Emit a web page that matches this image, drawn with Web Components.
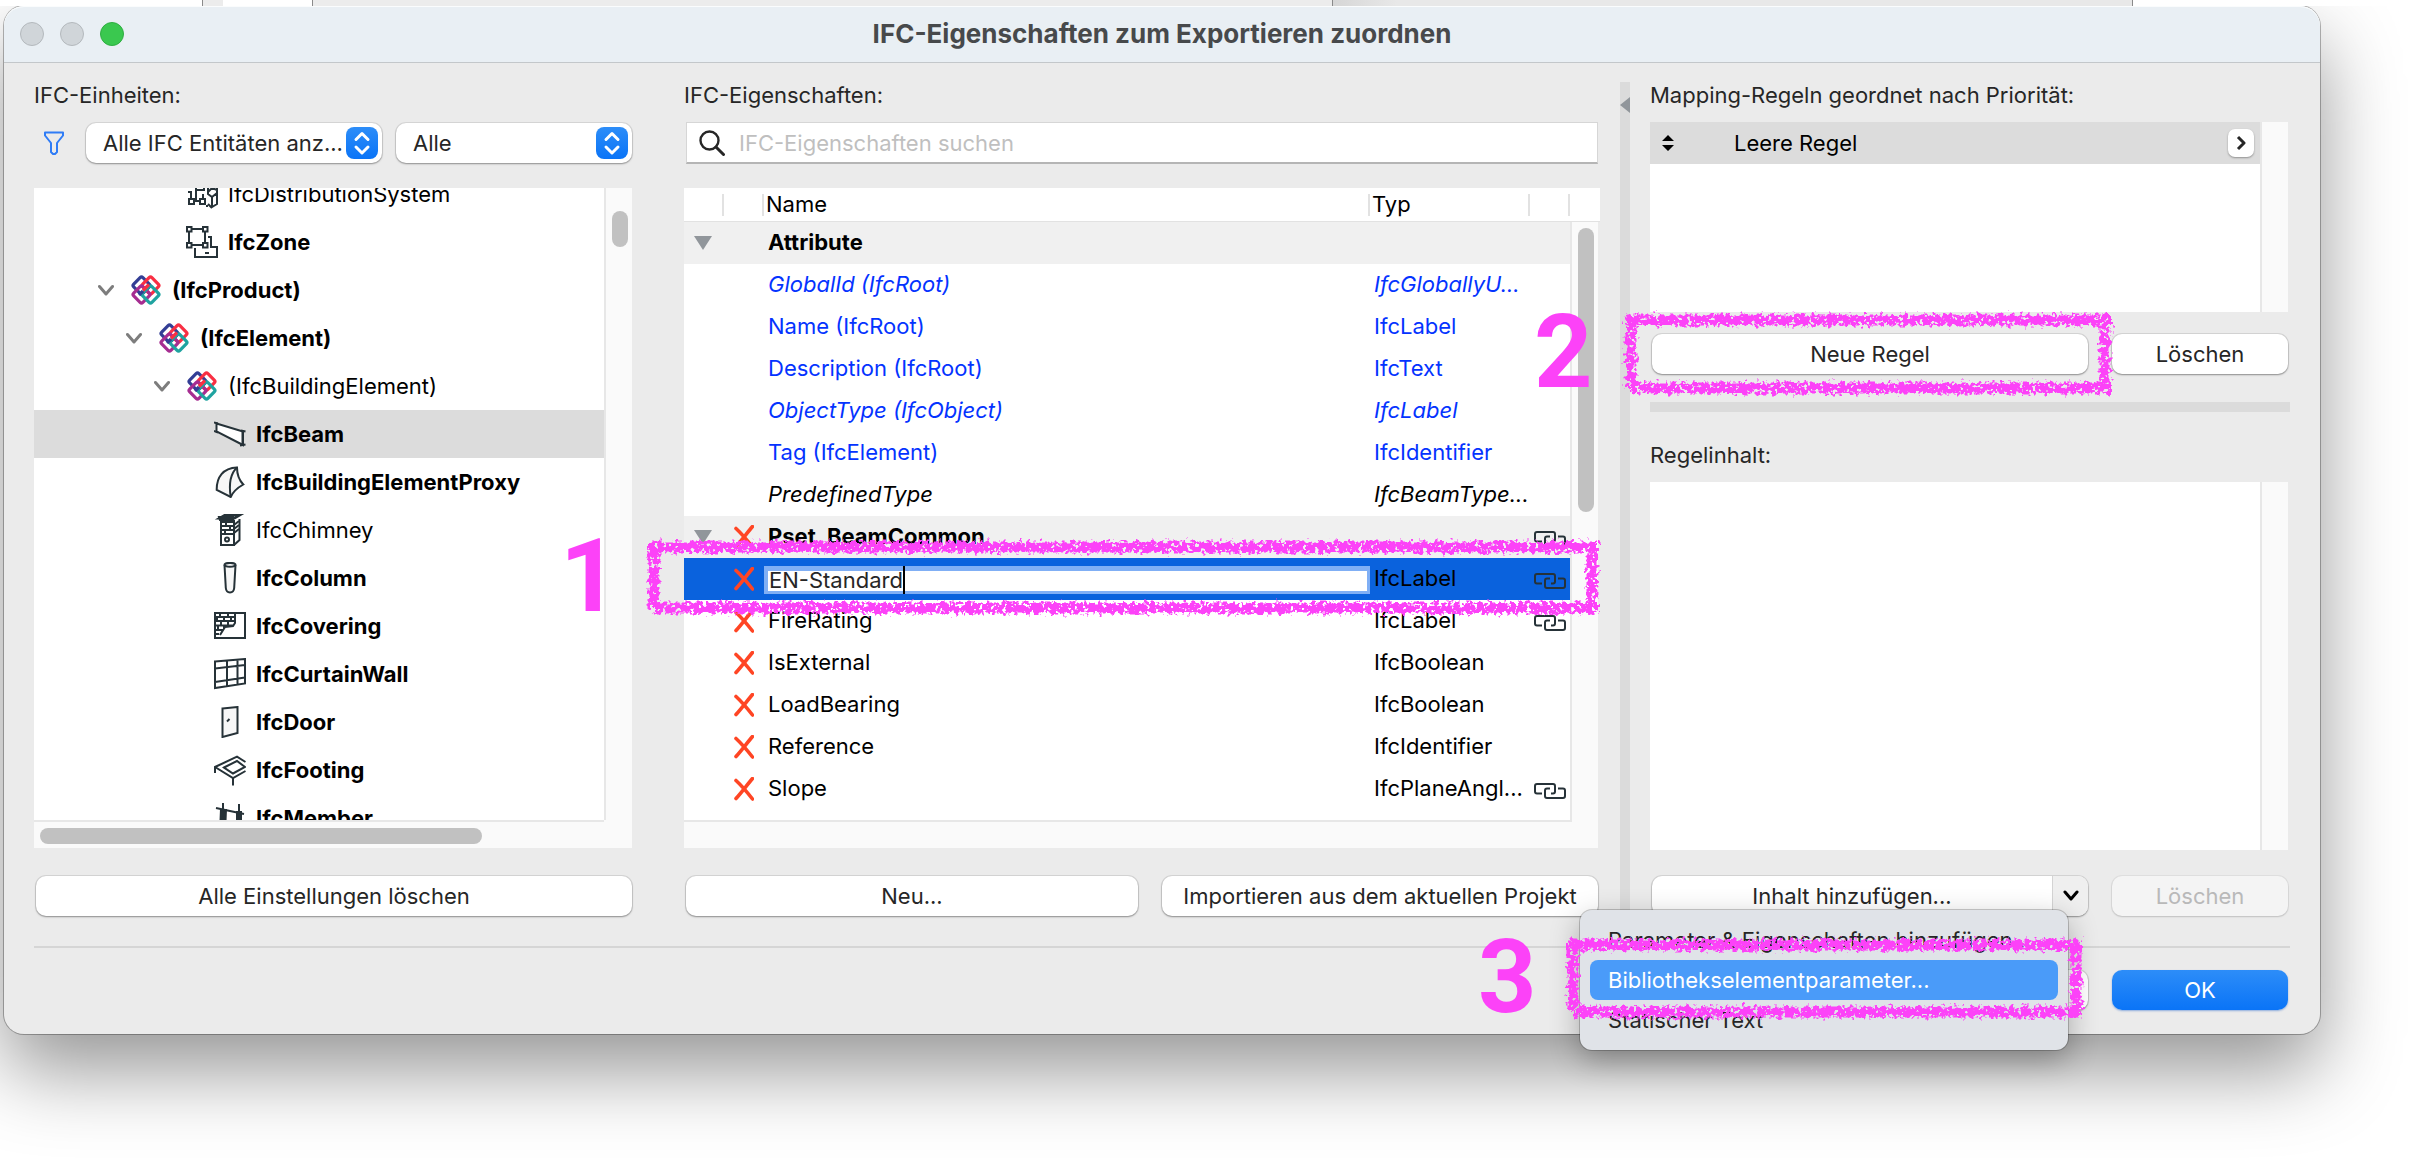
<!DOCTYPE html>
<html lang="de">
<head>
<meta charset="utf-8">
<title>IFC-Eigenschaften zum Exportieren zuordnen</title>
<style>
  html, body { margin: 0; }
  body {
    position: relative;
    min-height: 1168px;
    background: #fff;
    overflow-x: hidden;
    font: 22px/26px Inter, "Liberation Sans", sans-serif;
    color: #262626;
  }
</style>
</head>
<body>
<windows-behind></windows-behind>
<mac-window heading="IFC-Eigenschaften zum Exportieren zuordnen">
  <entity-panel slot="left"></entity-panel>
  <property-panel slot="middle"></property-panel>
  <split-bar slot="splitter"></split-bar>
  <rule-panel slot="right"></rule-panel>
  <push-button slot="actions" label="Abbrechen" blank></push-button>
  <push-button slot="actions" label="OK" kind="primary"></push-button>
</mac-window>
<marker-layer></marker-layer>

<script>
const make = (host, html) => {
  host.attachShadow({ mode: 'open' }).innerHTML =
    '<style>*,*::before,*::after{box-sizing:border-box}</style>' + html;
};

/* Edges of the other windows that show above the dialog */
customElements.define('windows-behind', class extends HTMLElement {
  connectedCallback() {
    make(this, `<style>
      :host{display:flex;height:6px}
      div{border-left:1px solid #8a8a8a;background:#ececec}
      .a{flex:202;border:0;background:#fff}.b{flex:20}.c{flex:89;background:#fff;border:0}
      .d{flex:1021}.e{flex:801;background:linear-gradient(90deg,#d6d6d6,#e8e8e8 8%)}
      .f{flex:287;background:#fff}
    </style><div class="a"></div><div class="b"></div><div class="c"></div><div class="d"></div><div class="e"></div><div class="f"></div>`);
  }
});

customElements.define('mac-window', class extends HTMLElement {
  connectedCallback() {
    make(this, `<style>
      :host{display:block;margin:0 100px 0 4px;background:#ebebeb;border-radius:20px;
        box-shadow:0 0 0 1px rgba(0,0,0,.28),0 36px 80px rgba(0,0,0,.42)}
      header{display:grid;grid-template-columns:1fr auto 1fr;align-items:center;height:57px;
        padding:0 16px;background:#e9eff4;border-bottom:1px solid #c3c7ca;border-radius:20px 20px 0 0;
        box-shadow:inset 0 1px #fafcfd}
      h1{margin:0;font-size:26px;line-height:32px;font-weight:700;color:#47494b}
      .lights{display:flex;gap:16px}
      .lights button{width:24px;height:24px;padding:0;border-radius:50%;border:1px solid #b4b9bd;background:#d0d5d9}
      .lights button.zoom{background:#3ac84f;border-color:#2fae41}
      main{display:grid;grid-template-columns:598fr 52px 916fr 20px 10px 20px 640fr;padding:19px 30px 0}
      ::slotted([slot=left]){grid-column:1}
      ::slotted([slot=middle]){grid-column:3}
      ::slotted([slot=splitter]){grid-column:5}
      ::slotted([slot=right]){grid-column:7}
      hr{height:2px;margin:30px 30px 22px;border:0;background:#d5d5d5}
      footer{display:flex;justify-content:flex-end;gap:24px;padding:0 32px 24px}
      ::slotted([slot=actions]){width:176px}
    </style>
    <header><div class="lights"><button aria-label="Schließen"></button><button aria-label="Minimieren"></button><button class="zoom" aria-label="Zoomen"></button></div>
    <h1>${this.getAttribute('heading')}</h1></header>
    <main><slot name="left"></slot><slot name="middle"></slot><slot name="splitter"></slot><slot name="right"></slot></main>
    <hr><footer><slot name="actions"></slot></footer>`);
  }
});

customElements.define('push-button', class extends HTMLElement {
  connectedCallback() {
    const kind = this.getAttribute('kind') || '';
    const label = this.getAttribute('label');
    make(this, `<style>
      :host{display:block}
      button{display:block;width:100%;height:40px;padding:0 8px;border:0;border-radius:10px;background:#fff;
        font:inherit;color:#262626;white-space:nowrap;
        box-shadow:0 0 0 1px rgba(0,0,0,.09),0 1px 2px rgba(0,0,0,.34)}
      .primary{background:linear-gradient(#2d8df8,#0a74f7);color:#fff;box-shadow:0 1px 2px rgba(0,80,200,.4)}
      button:disabled{background:#f4f4f4;color:#b9b9b9;box-shadow:0 0 0 1px rgba(0,0,0,.05),0 1px 2px rgba(0,0,0,.14)}
    </style><button class="${kind}" ${kind === 'disabled' ? 'disabled' : ''} aria-label="${label}">${this.hasAttribute('blank') ? '' : label}</button>`);
  }
});

customElements.define('popup-select', class extends HTMLElement {
  connectedCallback() {
    const label = this.getAttribute('label');
    make(this, `<style>
      :host{display:grid;border-radius:10px;background:#fff;
        box-shadow:0 0 0 1px rgba(0,0,0,.08),0 1px 2px rgba(0,0,0,.34)}
      select,svg{grid-area:1/1}
      select{appearance:none;width:100%;height:40px;margin:0;padding:0 36px 0 17px;border:0;background:none;font:inherit;color:#262626}
      svg{justify-self:end;align-self:center;margin-right:4px;pointer-events:none}
    </style><select aria-label="${label}"><option>${this.getAttribute('value')}</option></select>
    <svg width="32" height="32"><defs><linearGradient id="g" x2="0" y2="1"><stop stop-color="#2d8df8"/><stop offset="1" stop-color="#0a74f7"/></linearGradient></defs>
    <rect width="32" height="32" rx="8" fill="url(#g)"/><path d="M10 12.500L16 6.500l6 6M10 20l6 6 6-6" fill="none" stroke="#fff" stroke-width="3" stroke-linecap="round" stroke-linejoin="round"/></svg>`);
  }
});

const ICONS = {
  system: '<path d="M2 6h8v6h8v-4M10 12v6M2 14h4M5 20v-6M14 23h-4v-9"/><rect x="3" y="21" width="5" height="5"/><rect x="14" y="21" width="5" height="5"/><path d="M17 21v-5M22 8v8l4 3 5-4V6M26 19v10l5-3V15M22 26l4 4M20 28h2M26 12v-6M22 14l4-4 5 2"/>',
  zone: '<rect x="1" y="1" width="4.500" height="4.500"/><rect x="17" y="1" width="4.500" height="4.500"/><rect x="1" y="17" width="4.500" height="4.500"/><rect x="17" y="17" width="4.500" height="4.500"/><path d="M5.500 3H17M5.500 19H17M3 5.500V17M19 5.500V17M22 11h3v10h6v10H9V22M19 27h4"/>',
  beam: '<path d="M2.500 5.500L29 13.500V27L2.500 13.500z" fill="#fff"/><path d="M0 4.500l4 1M0 13l4 1.500M27 12.500l4.500 1M26 27.500l5.500-1M28.500 13v14"/>',
  proxy: '<path d="M2.700 24C2.500 11 9 2 23 1.500 23 8 25 14 29.300 18.500 23 22 19 26 16.700 31z" fill="#f7f7f7"/><path d="M23 1.500C16 8 15 20 16.700 31"/>',
  chimney: '<path d="M7 5v26h13V6M20 31l5.500-5V5M4.500 4.500h16l6-3.500H10.500z" fill="#fff"/><path d="M5 4h15l3-2.500M7 8h13M7 12h13M7 16h13M7 20h13M12 8v4M16 12v4M11 16v4M20 11l5-4M20 15l5-4M20 19l5-4" stroke-width="2"/><path d="M5 3h14v3H6z" fill="#263238"/><circle cx="13" cy="25.500" r="2"/>',
  column: '<path d="M10.500 3l1.300 23q.4 4.500 4.200 4.500t4.200-4.500L21.500 3" fill="#f7f7f7"/><ellipse cx="16" cy="2.800" rx="5.500" ry="1.900" fill="#fff"/>',
  covering: '<rect x="1" y="3" width="30" height="25"/><path d="M1 7h20M1 11h20M1 15.500h19M1 20h8M1 24h4M6 3v4M14 3v4M21 3v10l-2 3-8 1-5 8M3 7v4M10 7v4M17 7v4M7 11v4M14 11v4M4 15v5M10 15v4"/>',
  curtain: '<path d="M1 3.500L31 1v24.500L1 30zM13 2.500V28M23.500 1.500v25M1 10.500L31 7M1 24l30-4.500"/>',
  door: '<path d="M8.500 2.500L23.500 1v26l-15 4z" fill="#f7f7f7"/><path d="M13 15.500l2.500-2.500"/>',
  footing: '<path d="M1 19v-6L23 2.700 31.500 8M1 13l18 11 12.500-7M19 24v7.500M10 13.500L23 7l8 6-12 6.500z"/>',
  member: '<path d="M6 7h7l-1 25H5zM22 9h6v23h-6z" fill="#263238" stroke="none"/><path d="M9 1v7M25 2v8M2 6l28 6" />',
  ifc: '<g stroke-width="3.200"><rect x="5" y="5" width="13" height="13" rx="2" transform="rotate(45 11.500 11.500)" stroke="#333e95"/><rect x="14" y="5" width="13" height="13" rx="2" transform="rotate(45 20.500 11.500)" stroke="#f92f43"/><rect x="5" y="14" width="13" height="13" rx="2" transform="rotate(45 11.500 20.500)" stroke="#a62d91"/><rect x="14" y="14" width="13" height="13" rx="2" transform="rotate(45 20.500 20.500)" stroke="#1fa3a0"/><path d="M19 10.500l-6 6" stroke="#f92f43"/><path d="M13 17l-4 4" stroke="#333e95"/></g>'
};

customElements.define('tree-item', class extends HTMLElement {
  connectedCallback() {
    const icon = this.getAttribute('icon');
    make(this, `<style>
      :host{display:flex;align-items:center;height:48px;padding-left:var(--indent);color:#000;white-space:nowrap}
      :host([strong]){font-weight:700}
      :host([selected]){background:#dcdcdc}
      .twist{width:16px;margin-right:16px}
      .icon{margin-right:10px;fill:none;stroke:#263238;stroke-width:2}
    </style>${icon === 'ifc' ? '<svg class="twist" width="16" height="16" viewBox="0 0 16 16" fill="none" stroke="#7d7d7d" stroke-width="3" stroke-linecap="round" stroke-linejoin="round"><path d="M1.500 4.500L8 12l6.500-7.500"/></svg>' : ''}
    <svg class="icon" width="32" height="32" viewBox="0 0 32 32">${ICONS[icon]}</svg><span><slot></slot></span>`);
  }
});

customElements.define('entity-panel', class extends HTMLElement {
  connectedCallback() {
    const rows = [
      [152, 'system', 'IfcDistributionSystem', ''], [152, 'zone', 'IfcZone', 'strong'],
      [64, 'ifc', '(IfcProduct)', 'strong'], [92, 'ifc', '(IfcElement)', 'strong'], [120, 'ifc', '(IfcBuildingElement)', ''],
      [180, 'beam', 'IfcBeam', 'strong selected'], [180, 'proxy', 'IfcBuildingElementProxy', 'strong'],
      [180, 'chimney', 'IfcChimney', ''], [180, 'column', 'IfcColumn', 'strong'], [180, 'covering', 'IfcCovering', 'strong'],
      [180, 'curtain', 'IfcCurtainWall', 'strong'], [180, 'door', 'IfcDoor', 'strong'], [180, 'footing', 'IfcFooting', 'strong'],
      [180, 'member', 'IfcMember', 'strong']
    ];
    make(this, `<style>
      :host{display:flex;flex-direction:column}
      .title{margin-bottom:14px}
      .filters{display:flex;align-items:center;height:42px;margin-bottom:24px;padding-left:10px}
      .filters svg{width:20px;margin-right:22px}
      .one{flex:296;margin-right:14px}.two{flex:236}
      .box{display:grid;grid-template-columns:minmax(0,1fr) 28px;grid-template-rows:632px 28px;background:#fafafa;margin-bottom:28px}
      .tree{display:flex;flex-direction:column;justify-content:flex-start;overflow:hidden;background:#fff}
      .tree div{margin-top:-18px}
      .v{border-left:2px solid #e7e7e7;padding:23px 4px 0 6px}
      .v i{display:block;height:36px;border-radius:8px;background:#c1c1c1}
      .h{border-top:2px solid #e7e7e7;padding:6px 122px 0 6px}
      .h i{display:block;height:16px;border-radius:8px;background:#c1c1c1}
      push-button{margin-left:2px}
    </style>
    <div class="title">IFC-Einheiten:</div>
    <div class="filters"><svg width="20" height="24" viewBox="0 0 20 24" fill="none" stroke="#2f7cf6" stroke-width="2" stroke-linejoin="round"><path d="M1 1.500h18v3l-6 7.500v9l-2 2H9l-2-2V12L1 4.500z"/></svg>
    <popup-select class="one" label="Entitäten" value="Alle IFC Entitäten anz..."></popup-select><popup-select class="two" label="Auswahl" value="Alle"></popup-select></div>
    <div class="box"><div class="tree" role="tree"><div>${rows.map(([x, i, t, a]) => `<tree-item role="treeitem" icon="${i}" style="--indent:${x}px" ${a}>${t}</tree-item>`).join('')}</div></div>
    <div class="v"><i></i></div><div class="h"><i></i></div></div>
    <push-button label="Alle Einstellungen löschen"></push-button>`);
  }
});

customElements.define('property-panel', class extends HTMLElement {
  connectedCallback() {
    const tri = '<svg width="18" height="14"><path d="M0 0h18L9 14z" fill="#91969b"/></svg>';
    const cross = '<svg width="20" height="24" viewBox="0 0 20 24" fill="none" stroke="#ff4524" stroke-width="3.600" stroke-linecap="round"><path d="M18.500 1.500C13 8 7 16 2 21.500M2 3.500C8 9 13 15 18.500 22"/></svg>';
    const link = '<svg width="32" height="16" viewBox="0 0 32 16" fill="none" stroke="#263238" stroke-width="2" stroke-linejoin="round"><path d="M8 10.500H3q-2 0-2-2V3q0-2 2-2h16q2 0 2 2v5.500q0 2-2 2h-2"/><path d="M24 5.500h5q2 0 2 2V13q0 2-2 2H13q-2 0-2-2V7.500q0-2 2-2h3"/></svg>';
    const rows = [
      ['g', 'Attribute', ''], ['b i', 'GlobalId (IfcRoot)', 'IfcGloballyU...'], ['b', 'Name (IfcRoot)', 'IfcLabel'],
      ['b', 'Description (IfcRoot)', 'IfcText'], ['b i', 'ObjectType (IfcObject)', 'IfcLabel'], ['b', 'Tag (IfcElement)', 'IfcIdentifier'],
      ['i', 'PredefinedType', 'IfcBeamType...'], ['g', 'Pset_BeamCommon', '', 1, 1], ['sel', 'EN-Standard', 'IfcLabel', 1, 1],
      ['', 'FireRating', 'IfcLabel', 1, 1], ['', 'IsExternal', 'IfcBoolean', 1], ['', 'LoadBearing', 'IfcBoolean', 1],
      ['', 'Reference', 'IfcIdentifier', 1], ['', 'Slope', 'IfcPlaneAngl...', 1, 1]
    ];
    const name = (c, n) => c === 'sel'
      ? `<div class="edit"><input aria-label="Name" size="9" value="${n}"><span class="caret"></span></div>` : n;
    make(this, `<style>
      :host{display:flex;flex-direction:column}
      .title{margin-bottom:14px}
      .search{display:flex;align-items:center;height:42px;margin:0 2px 24px;padding-left:12px;background:#fff;
        border:1px solid #d6d6d6;border-bottom:2px solid #b5b5b5}
      .search input{flex:1;margin-left:14px;padding:0;border:0;outline:0;background:none;font:inherit}
      .search input::placeholder{color:#bfbfbf;opacity:1}
      .box{display:grid;grid-template-columns:minmax(0,1fr) 30px;grid-template-rows:632px 28px;margin-bottom:28px}
      .list{background:#fff;overflow:hidden}
      table{width:100%;table-layout:fixed;border-collapse:separate;border-spacing:0;color:#000}
      th{position:relative;height:34px;padding:0 0 2px 2px;border-bottom:1px solid #e2e2e2;font-weight:400;text-align:left}
      th::after{content:"";position:absolute;right:0;top:6px;width:2px;height:22px;background:#e2e2e2}
      td{height:42px;padding:0 0 2px 4px;white-space:nowrap}
      td svg{display:block}
      td:nth-child(1),td:nth-child(2){padding:0 0 0 10px}
      td.l{padding:4px 0 0 4px}
      td.e{padding:2px 0 0}
      .g td{background:#f0f0f0;font-weight:700}
      .b td{color:#0433ff}.i td{font-style:italic}
      .sel td{background:#0a62dd}
      .edit{display:flex;height:28px;border:solid #80aff5;border-width:5px 3px 3px 4px;background:#fff}
      .edit input{field-sizing:content;align-self:center;height:26px;padding:0 0 2px 1px;border:0;outline:0;background:none;font:inherit;color:#262626}
      .caret{width:2px;margin:-5px 0 -3px;background:#000}
      .gutter{display:grid;grid-template-rows:34px 1fr}
      .cap{background:#fff;border-bottom:1px solid #e2e2e2}
      .v{margin-right:2px;border-left:2px solid #e7e7e7;background:#fafafa;padding:6px 4px 0 6px}
      .v i{display:block;height:284px;border-radius:8px;background:#c1c1c1}
      .h{grid-column:1/3;margin-right:2px;background:#fafafa}
      .h::before{content:"";display:block;height:2px;margin-right:26px;background:#e7e7e7}
      .actions{display:grid;grid-template-columns:452fr 436fr;gap:24px;padding:0 2px}
    </style>
    <div class="title">IFC-Eigenschaften:</div>
    <div class="search"><svg width="26" height="26" viewBox="0 0 26 26" fill="none" stroke="#262626" stroke-width="2.400" stroke-linecap="round"><circle cx="10.500" cy="10.500" r="9"/><path d="M17 17l7.500 7.500" stroke-width="3"/></svg>
    <input type="search" aria-label="IFC-Eigenschaften suchen" placeholder="IFC-Eigenschaften suchen"></div>
    <div class="box"><div class="list"><table><colgroup><col style="width:40px"><col style="width:40px"><col><col style="width:160px"><col style="width:40px"></colgroup>
    <thead><tr><th></th><th></th><th>Name</th><th>Typ</th><th></th></tr></thead>
    <tbody>${rows.map(([c, n, t, x, l]) => `<tr class="${c}"><td>${c === 'g' ? tri : ''}</td><td>${x ? cross : ''}</td><td class="${c === 'sel' ? 'e' : ''}">${name(c, n)}</td><td>${t}</td><td class="l">${l ? link : ''}</td></tr>`).join('')}</tbody></table></div>
    <div class="gutter"><div class="cap"></div><div class="v"><i></i></div></div><div class="h"></div></div>
    <div class="actions"><push-button label="Neu..."></push-button><push-button label="Importieren aus dem aktuellen Projekt"></push-button></div>`);
  }
});

customElements.define('split-bar', class extends HTMLElement {
  connectedCallback() {
    make(this, `<style>:host{display:block;background:#dbdbdb;padding-top:15px}svg{display:block}</style>
    <svg width="10" height="16"><path d="M10 0v16L0 8z" fill="#91969b"/></svg>`);
  }
});

customElements.define('rule-panel', class extends HTMLElement {
  connectedCallback() {
    make(this, `<style>
      :host{display:flex;flex-direction:column}
      .title{margin-bottom:14px}
      .list{display:grid;grid-template-columns:1fr 28px;margin-right:2px;background:#fff}
      .list::after{content:"";grid-area:1/2;background:#fafafa;border-left:2px solid #e7e7e7}
      .rules{height:190px;margin-bottom:22px}
      .content{height:368px;margin-bottom:26px}
      .row{display:flex;align-items:center;height:42px;padding:0 6px 0 12px;background:#dcdcdc;color:#000}
      .row span{flex:1;padding-left:60px}
      .row button{display:grid;place-items:center;width:26px;height:28px;padding:0;border:0;border-radius:7px;background:#fff;box-shadow:0 1px 2px rgba(0,0,0,.35)}
      .actions{display:grid;grid-template-columns:436fr 176fr;gap:24px;padding:0 2px}
      .bar{height:10px;margin:28px 0 30px;background:#dbdbdb}
    </style>
    <div class="title">Mapping-Regeln geordnet nach Priorität:</div>
    <div class="list rules"><div><div class="row"><svg width="12" height="16"><path d="M0 6l6-6 6 6zM0 10h12l-6 6z"/></svg><span>Leere Regel</span>
    <button aria-label="Bearbeiten"><svg width="10" height="16" fill="none" stroke="#262626" stroke-width="3" stroke-linejoin="round"><path d="M2 2l6 6-6 6"/></svg></button></div></div></div>
    <div class="actions"><push-button label="Neue Regel"></push-button><push-button label="Löschen"></push-button></div>
    <div class="bar"></div>
    <div class="title">Regelinhalt:</div>
    <div class="list content"></div>
    <div class="actions"><split-button label="Inhalt hinzufügen..."><popup-menu></popup-menu></split-button><push-button label="Löschen" kind="disabled"></push-button></div>`);
  }
});

customElements.define('split-button', class extends HTMLElement {
  connectedCallback() {
    make(this, `<style>
      :host{display:flex;position:relative;height:40px;border-radius:10px;background:#fff;
        box-shadow:0 0 0 1px rgba(0,0,0,.09),0 1px 2px rgba(0,0,0,.34)}
      button{padding:0;border:0;background:none;font:inherit;color:#262626}
      .main{flex:1}
      .more{display:grid;place-items:center;width:36px;border-left:1px solid #d4d4d4;border-radius:0 10px 10px 0;background:#efefef}
      ::slotted(popup-menu){position:absolute;right:20px;top:34px;z-index:1}
    </style><button class="main">${this.getAttribute('label')}</button>
    <button class="more" aria-label="Menü"><svg width="16" height="12" fill="none" stroke="#000" stroke-width="3" stroke-linecap="round" stroke-linejoin="round"><path d="M2 2l6 7 6-7"/></svg></button><slot></slot>`);
  }
});

customElements.define('popup-menu', class extends HTMLElement {
  connectedCallback() {
    make(this, `<style>
      :host{display:block;width:488px;padding:10px;border-radius:12px;background:#e0e3e8;
        box-shadow:0 0 0 1px rgba(0,0,0,.2),0 10px 30px rgba(0,0,0,.3)}
      button{display:block;width:100%;height:40px;padding:0 0 0 18px;border:0;border-radius:8px;background:none;text-align:left;font:inherit;color:#262626}
      .on{background:#4a9bf9;color:#fff}
    </style><div role="menu"><button role="menuitem">Parameter &amp; Eigenschaften hinzufügen...</button><button role="menuitem" class="on">Bibliothekselementparameter...</button><button role="menuitem">Statischer Text</button></div>`);
  }
});

/* Numbered chalk frames drawn over the dialog */
customElements.define('chalk-frame', class extends HTMLElement {
  connectedCallback() {
    const w = +this.getAttribute('w'), h = +this.getAttribute('h');
    make(this, `<style>:host{display:block}svg{display:block;overflow:visible}</style>
    <svg width="${w}" height="${h}"><defs><filter id="chalk" filterUnits="userSpaceOnUse" x="-10" y="-10" width="${w + 20}" height="${h + 20}" color-interpolation-filters="sRGB">
      <feTurbulence type="fractalNoise" baseFrequency=".25" numOctaves="3" seed="${w % 17}" result="n"/>
      <feDisplacementMap in="SourceGraphic" in2="n" scale="12" xChannelSelector="R" yChannelSelector="G" result="d"/>
      <feColorMatrix in="n" values="0 0 0 0 0 0 0 0 0 0 0 0 0 0 0 0 0 0 14 -4.300" result="m"/>
      <feComposite in="d" in2="m" operator="in"/></filter></defs>
      <g filter="url(#chalk)" stroke="#fc42f8" stroke-width="11"><path d="M1 7H${w - 1}M7 2V${h - 8}M8 ${h - 7}H${w - 1}M${w - 7} 2V${h - 2}"/></g></svg>`);
  }
});

customElements.define('marker-layer', class extends HTMLElement {
  connectedCallback() {
    make(this, `<style>
      :host{position:absolute;inset:0;pointer-events:none;z-index:2}
      chalk-frame,b{position:absolute}
      b{font:700 102px/102px Roboto,"Liberation Sans",sans-serif;color:#fc42f8}
    </style>
    <chalk-frame w="952" h="75" style="left:647px;top:540px"></chalk-frame><b style="left:560px;top:525px">1</b>
    <chalk-frame w="488" h="82" style="left:1624px;top:313px"></chalk-frame><b style="left:1534px;top:301px">2</b>
    <chalk-frame w="517" h="81" style="left:1566px;top:938px"></chalk-frame><b style="left:1478px;top:926px">3</b>`);
  }
});
</script>
</body>
</html>
